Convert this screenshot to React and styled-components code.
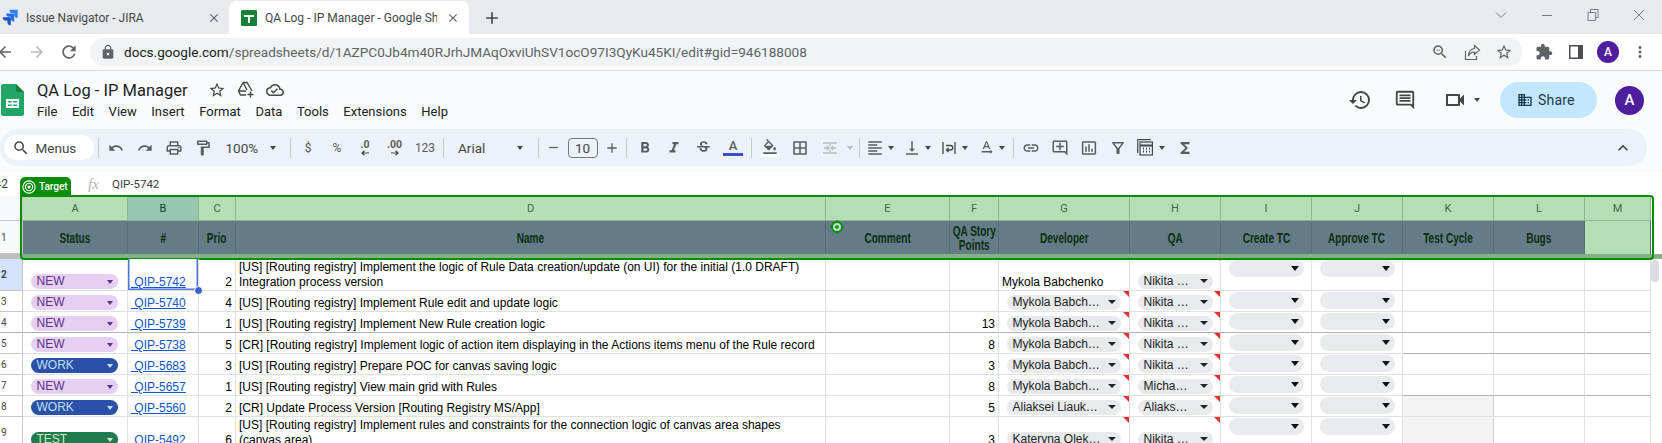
import React from 'react';
import styled, { createGlobalStyle } from 'styled-components';
import {
  MdAdd, MdArrowBack, MdArrowForward, MdBusiness, MdClose, MdExpandLess, MdExtension,
  MdFormatAlignLeft, MdFormatBold, MdFormatColorFill, MdFormatItalic, MdFunctions,
  MdHistory, MdInsertChartOutlined, MdLink, MdLock, MdMoreVert, MdOutlineAddComment, MdOutlineBorderAll,
  MdOutlineCloudDone, MdOutlineComment, MdOutlineFilterAlt, MdOutlineFormatPaint, MdOutlinePrint, MdOutlineVideocam, MdRedo,
  MdRefresh, MdRemove, MdSearch, MdStarBorder, MdStrikethroughS, MdTextRotationNone, MdUndo,
  MdVerticalAlignBottom, MdZoomOut,
} from 'react-icons/md';

const GlobalStyle = createGlobalStyle`
  html, body { margin: 0; padding: 0; background: #fff; overflow: hidden; }
  body { width: 1662px; height: 443px; font-family: Roboto, "Liberation Sans", sans-serif; }
`;

const Page = styled.div`
  width: 1662px;
  height: 443px;
  overflow: hidden;
`;

/* browser chrome */
const TabBar = styled.div`
  display: flex;
  align-items: stretch;
  height: 33px;
  padding-top: 1px;
  background: #e8eaed;
`;

const Tab = styled.div`
  display: flex;
  align-items: center;
  width: ${(p) => p.$w}px;
  padding-left: ${(p) => p.$pad}px;
  box-sizing: border-box;
  background: ${(p) => (p.$active ? '#fff' : 'transparent')};
  border-radius: 8px 8px 0 0;
  color: #45474a;
  font-size: 12px;
`;

const TabTitle = styled.span`
  width: ${(p) => p.$w}px;
  margin-left: ${(p) => p.$ml}px;
  overflow: hidden;
  white-space: nowrap;
`;

const TabClose = styled.span`
  display: flex;
  margin-left: ${(p) => p.$ml || 0}px;
  color: #5f6368;
`;

const NewTab = styled.span`
  display: flex;
  align-items: center;
  margin-left: 13px;
  color: #45474a;
`;

const WindowControls = styled.div`
  display: flex;
  margin-left: auto;
`;

const WindowButton = styled.span`
  display: flex;
  align-items: center;
  justify-content: center;
  width: 46px;
  height: 28px;
`;

const AddressRow = styled.div`
  display: flex;
  align-items: center;
  height: 36px;
  background: #fff;
  border-bottom: 1px solid #dadce0;
`;

const NavButton = styled.span`
  display: flex;
  justify-content: center;
  width: 32px;
  flex: none;
  color: ${(p) => (p.$dim ? '#b4b7bb' : '#5f6368')};
  &:first-child { margin-left: -11px; }
`;

const Omnibox = styled.div`
  display: flex;
  align-items: center;
  width: 1432px;
  height: 28px;
  margin-left: 5px;
  padding: 0 2px 0 10px;
  box-sizing: border-box;
  background: #f1f3f4;
  border-radius: 14px;
  color: #5f6368;
`;

const Url = styled.div`
  flex: 1;
  margin-left: 8px;
  font-size: 13.6px;
  color: #5f6368;
  white-space: nowrap;
`;

const Host = styled.span`
  color: #202124;
`;

const OmniButton = styled.span`
  display: flex;
  justify-content: center;
  width: 32px;
  color: #5f6368;
`;

const ChromeActions = styled.div`
  display: flex;
  align-items: center;
  margin-left: 6px;
`;

const Avatar = styled.span`
  display: flex;
  align-items: center;
  justify-content: center;
  width: ${(p) => p.$size}px;
  height: ${(p) => p.$size}px;
  background: #4f1e9e;
  border-radius: 50%;
  color: #fff;
  font-size: ${(p) => p.$font}px;
  font-weight: 500;
`;

const AvatarSlot = styled.span`
  display: flex;
  justify-content: center;
  width: 32px;
`;

/* docs header */
const DocArea = styled.div`
  background: #f9fbfd;
  padding-bottom: 6px;
`;

const DocHeader = styled.div`
  display: flex;
  align-items: center;
  height: 58px;
  padding-left: 1px;
  padding-right: 18px;
`;

const DocInfo = styled.div`
  margin-left: 13px;
`;

const TitleRow = styled.div`
  display: flex;
  align-items: center;
  height: 22px;
`;

const DocTitle = styled.span`
  width: 150px;
  color: #1f1f1f;
  font-size: 16.5px;
  white-space: nowrap;
`;

const TitleIcons = styled.div`
  display: flex;
  margin-left: 15px;
  color: #444746;
`;

const TitleIcon = styled.span`
  display: flex;
  justify-content: center;
  width: 29px;
`;

const Menu = styled.div`
  display: flex;
  gap: 14.6px;
  margin-top: 2px;
  line-height: 18px;
  color: #202124;
  font-size: 13px;
`;

const DocActions = styled.div`
  display: flex;
  align-items: center;
  margin-left: auto;
  color: #444746;
`;

const DocAction = styled.span`
  display: flex;
  justify-content: center;
  width: ${(p) => p.$w}px;
  margin-left: ${(p) => p.$ml || 0}px;
`;

const ShareButton = styled.div`
  display: flex;
  align-items: center;
  gap: 5px;
  width: 97px;
  height: 36px;
  margin-left: 18px;
  padding-left: 17px;
  box-sizing: border-box;
  background: #c2e7ff;
  border-radius: 18px;
  color: #1c3a52;
  font-size: 14px;
  letter-spacing: 0.2px;
`;

const DocAvatar = styled.div`
  margin-left: 18px;
`;

/* toolbar */
const Toolbar = styled.div`
  display: flex;
  align-items: center;
  width: 1647px;
  height: 37px;
  padding-left: 3.5px;
  box-sizing: border-box;
  background: #edf2fa;
  border-radius: 18px;
`;

const SearchMenus = styled.div`
  display: flex;
  align-items: center;
  gap: 6px;
  width: 90px;
  height: 25px;
  padding-left: 8px;
  box-sizing: border-box;
  background: #fff;
  border-radius: 13px;
  color: #444746;
  font-size: 13.5px;
`;

const Sep = styled.span`
  display: flex;
  justify-content: center;
  flex: none;
  width: ${(p) => p.$w}px;
  &::after {
    content: '';
    width: 1px;
    height: 20px;
    background: #c7c7c7;
  }
`;

const Slot = styled.span`
  display: flex;
  align-items: center;
  justify-content: center;
  flex: none;
  width: ${(p) => p.$w}px;
  margin-left: ${(p) => p.$ml || 0}px;
  color: ${(p) => (p.$off ? '#b8bbbf' : '#5a5d60')};
  font-size: 12px;
`;

const Caret = styled.span`
  width: 0;
  height: 0;
  border-left: 3.5px solid transparent;
  border-right: 3.5px solid transparent;
  border-top: 4px solid ${(p) => (p.$off ? '#b8bbbf' : '#444746')};
`;

const TextPicker = styled.span`
  display: flex;
  align-items: center;
  flex: none;
  width: ${(p) => p.$w}px;
  padding-left: ${(p) => p.$pad}px;
  box-sizing: border-box;
  color: #444746;
  font-size: 13.5px;
`;

const PickerText = styled.span`
  width: ${(p) => p.$w}px;
`;

const SizeBox = styled.span`
  display: flex;
  align-items: center;
  justify-content: center;
  flex: none;
  width: 30px;
  height: 20px;
  margin: 0 4px;
  border: 1px solid #747775;
  border-radius: 4px;
  box-sizing: border-box;
  color: #444746;
  font-size: 13.5px;
`;

const Decimal = styled.span`
  display: flex;
  flex-direction: column;
  align-items: center;
  font-size: 10.5px;
  font-weight: 700;
  line-height: 10px;
`;

const ColorGlyph = styled.span`
  display: flex;
  flex-direction: column;
  align-items: center;
  font-size: 13px;
  font-weight: 500;
  line-height: 14px;
  &::after {
    content: '';
    width: 20px;
    height: 3px;
    background: ${(p) => p.$bar};
  }
`;

const FillGlyph = styled.span`
  display: flex;
  flex-direction: column;
  align-items: center;
  &::after {
    content: '';
    width: 20px;
    height: 3px;
    margin-top: -1px;
    background: #fff;
  }
`;

const Collapse = styled.span`
  display: flex;
  justify-content: center;
  width: 30px;
  margin-left: auto;
  margin-right: 9.5px;
  color: #444746;
`;

/* formula bar */
const FormulaBar = styled.div`
  display: flex;
  align-items: center;
  height: 24px;
  background: #fff;
  color: #3c4043;
  font-size: 11.5px;
`;

const NameBox = styled.span`
  width: 93.5px;
  margin-left: -5.5px;
  flex: none;
  font-size: 12px;
`;

const FxMark = styled.span`
  width: 24px;
  color: #b5b5b5;
  font: italic 15px "Liberation Serif", serif;
`;

/* sheet */
const COLS = '23px 105px 71px 37px 590px 124px 49px 131px 91px 91px 91px 91px 91px 66px 11px';

const Sheet = styled.div`
  position: relative;
  font-family: "Liberation Sans", Arial, sans-serif;
  font-size: 12px;
  color: #000;
`;

const Row = styled.div`
  display: grid;
  grid-template-columns: ${COLS};
  height: ${(p) => p.$h}px;
`;

const RowHead = styled.div`
  display: flex;
  align-items: center;
  padding-left: 1px;
  overflow: hidden;
  background: ${(p) => (p.$on ? '#d3e3fd' : p.$tint ? '#f8f9fa' : '#fff')};
  border-right: 1px solid #c7c7c7;
  border-bottom: 1px solid ${(p) => (p.$strong ? '#b0b0b0' : '#c7c7c7')};
  font-family: Roboto, sans-serif;
  font-size: 10px;
  font-weight: ${(p) => (p.$on ? 700 : 400)};
  color: #444;
`;

const ColHead = styled.div`
  display: flex;
  align-items: center;
  justify-content: center;
  padding-top: 1px;
  background: ${(p) => (p.$on ? '#97c7b3' : '#b5deb5')};
  border-right: 1px solid #8cb88c;
  border-bottom: 1px solid #8cb88c;
  color: ${(p) => (p.$on ? '#123c2c' : '#3f6b40')};
  font-family: Roboto, sans-serif;
  font-size: 11px;
`;

const TitleCell = styled.div`
  display: flex;
  align-items: center;
  justify-content: center;
  background: ${(p) => (p.$blank ? '#b5deb5' : '#647b88')};
  border-right: 1px solid #566d7a;
  color: #0e2e0c;
  font-size: 15px;
  font-weight: 700;
  line-height: 14px;
  text-align: center;
`;

/* no condensed face is installed, so the heading face is squeezed */
const TitleText = styled.span`
  display: inline-block;
  white-space: nowrap;
  transform: scaleX(0.67);
`;

const ThawBar = styled.div`
  display: flex;
  height: 5px;
  background: #84b284;
`;

const ThawHead = styled.div`
  width: 21px;
  background: #bdbdbd;
`;

const Cell = styled.div`
  position: relative;
  display: flex;
  align-items: ${(p) => p.$align || 'flex-end'};
  justify-content: ${(p) => (p.$right ? 'flex-end' : 'flex-start')};
  min-width: 0;
  padding: ${(p) => p.$pad || '0 3px'};
  box-sizing: border-box;
  overflow: ${(p) => (p.$selected ? 'visible' : 'hidden')};
  z-index: ${(p) => (p.$selected ? 2 : 'auto')};
  line-height: 15px;
  background: ${(p) => (p.$grey ? '#f3f3f3' : '#fff')};
  border-right: 1px solid ${(p) => (p.$grey ? '#d0d0d0' : '#e0e0e0')};
  border-bottom: 1px solid ${(p) => (p.$strong ? '#b0b0b0' : '#e0e0e0')};
  box-shadow: ${(p) => (p.$selected
    ? 'inset 1.5px 0 0 #4a76e0, inset -1.5px 0 0 #4a76e0, inset 0 -1.5px 0 #4a76e0'
    : 'none')};
`;

const SheetLink = styled.a`
  color: #1155cc;
  text-decoration: underline;
  white-space: pre;
`;

const Chip = styled.div`
  position: relative;
  display: flex;
  align-items: center;
  width: ${(p) => p.$w}px;
  height: 15px;
  margin-left: ${(p) => p.$ml}px;
  padding-left: 5.5px;
  box-sizing: border-box;
  background: ${(p) => p.$bg};
  border-radius: 8px;
  color: ${(p) => p.$fg};
  white-space: nowrap;
`;

const ChipCaret = styled.span`
  position: absolute;
  right: 5.5px;
  top: ${(p) => p.$top}px;
  width: 0;
  height: 0;
  border-left: ${(p) => p.$half}px solid transparent;
  border-right: ${(p) => p.$half}px solid transparent;
  border-top: ${(p) => p.$half + 0.5}px solid ${(p) => p.$color};
`;

const EmptyChip = styled.div`
  position: relative;
  width: 75px;
  height: 17px;
  margin: 1px 0 0 ${(p) => p.$ml}px;
  background: #e8eaed;
  border-radius: 8.5px;
`;

const Note = styled.span`
  position: absolute;
  top: ${(p) => p.$top || 0}px;
  right: 0;
  width: 0;
  height: 0;
  border-top: 6px solid #ea2f2f;
  border-left: 6px solid transparent;
`;

const FillHandle = styled.span`
  position: absolute;
  right: -5px;
  bottom: -5px;
  width: 7px;
  height: 7px;
  background: #3a62cf;
  border: 1px solid #fff;
  border-radius: 50%;
`;

const Frame = styled.div`
  position: absolute;
  left: 20px;
  top: -1px;
  width: 1634px;
  height: 65px;
  box-sizing: border-box;
  border: 2px solid #078c07;
  border-radius: 0 4px 4px 4px;
  pointer-events: none;
`;

const TargetTag = styled.div`
  position: absolute;
  left: 20px;
  top: -19px;
  display: flex;
  align-items: center;
  gap: 3px;
  width: 51px;
  height: 19px;
  padding-left: 2px;
  box-sizing: border-box;
  background: #078c07;
  border-radius: 5px 5px 0 0;
  color: #fff;
  font-family: Roboto, sans-serif;
  font-size: 10px;
  font-weight: 500;
`;

const Pin = styled.span`
  position: absolute;
  left: 830px;
  top: 24px;
  display: flex;
`;

const ScrollThumb = styled.div`
  position: absolute;
  right: 3px;
  top: 64px;
  width: 8px;
  height: 22px;
  background: #dadce0;
  border-radius: 4px;
`;

const ScrollCell = styled.div`
  background: #fff;
`;

const chromeIcon = { size: 18 };

function JiraIcon() {
  return (
    <svg width="17" height="17" viewBox="0 0 25 25">
      <path d="M23 1H11a5 5 0 0 0 5 5h2v2a5 5 0 0 0 5 5z" fill="#2684ff" />
      <path d="M18 6.500H6a5 5 0 0 0 5 5h2v2a5 5 0 0 0 5 5z" fill="#2a6fe8" />
      <path d="M13 12H1a5 5 0 0 0 5 5h2v2a5 5 0 0 0 5 5z" fill="#1d52c4" />
    </svg>
  );
}

function SheetsFavicon() {
  return (
    <svg width="16" height="16" viewBox="0 0 16 16">
      <rect width="16" height="16" rx="1" fill="#188038" />
      <path d="M3 5h10v2H9v6H7V7H3z" fill="#fff" />
    </svg>
  );
}

function SheetsLogo() {
  return (
    <svg width="23" height="32" viewBox="0 0 23 32">
      <path d="M2 0h13l8 8v22a2 2 0 0 1-2 2H2a2 2 0 0 1-2-2V2a2 2 0 0 1 2-2z" fill="#23a566" />
      <path d="M15 0l8 8h-6a2 2 0 0 1-2-2z" fill="#188038" />
      <path d="M5 15h13v9H5z" fill="#fff" />
      <path d="M7 17h3.800v1.500H7zM12.200 17H16v1.500h-3.800zM7 20.500h3.800V22H7zM12.200 20.500H16V22h-3.800z" fill="#23a566" />
    </svg>
  );
}

function DriveAddIcon() {
  return (
    <svg width="17" height="17" viewBox="0 0 17 17" fill="none" stroke="#444746" strokeWidth="1.400">
      <path d="M6 1.500h4l5 8.500M6 1.500L1.500 10 3.500 14H9M6 1.500L10 9M1.500 10H9" />
      <path d="M13.500 10.500v6M10.500 13.500h6" />
    </svg>
  );
}

function ChevronThin() {
  return (
    <svg width="12" height="12" viewBox="0 0 12 12" fill="none" stroke="#7c7f83">
      <path d="M1 3.500l5 5 5-5" />
    </svg>
  );
}

function MinimizeThin() {
  return (
    <svg width="12" height="12" viewBox="0 0 12 12" stroke="#7c7f83">
      <path d="M1 6.500h10" />
    </svg>
  );
}

function RestoreThin() {
  return (
    <svg width="12" height="12" viewBox="0 0 12 12" fill="none" stroke="#7c7f83">
      <path d="M1 3.500h7.500v8H1zM3.500 3.500v-3H11v8H8.500" />
    </svg>
  );
}

function CloseThin() {
  return (
    <svg width="12" height="12" viewBox="0 0 12 12" stroke="#7c7f83">
      <path d="M1 1l10 10M11 1L1 11" />
    </svg>
  );
}

function PageShare() {
  return (
    <svg width="17" height="17" viewBox="0 0 17 17" fill="none" stroke="#5f6368" strokeWidth="1.200">
      <path d="M1.500 7v8.500h11V12" />
      <path d="M10.500 1.500L15.500 6l-5 4.500V8C7.500 8 5.500 9.500 4.500 12c0-4 2-7 6-7.500z" />
    </svg>
  );
}

function SidePanel() {
  return (
    <svg width="14" height="14" viewBox="0 0 14 14">
      <rect width="14" height="14" fill="#4a4d51" />
      <rect x="1.500" y="1.500" width="7.500" height="11" fill="#fff" />
    </svg>
  );
}

function MergeIcon() {
  return (
    <svg width="14" height="14" viewBox="0 0 14 14" fill="none" stroke="#b8bbbf" strokeWidth="1.400">
      <path d="M0 2h14M0 12h14M6 7H1M8 7h5M4 5l2 2-2 2M10 5L8 7l2 2M7 3v2M7 9v2" />
    </svg>
  );
}

function WrapIcon() {
  return (
    <svg width="14" height="14" viewBox="0 0 14 14" fill="none" stroke="#444746" strokeWidth="1.300">
      <path d="M1 1v12M13 1v12M4 4.500h4.500a2.200 2.200 0 0 1 0 4.500H4.500M6.500 7L4.500 9l2 2" />
    </svg>
  );
}

function DecimalArrow({ right }) {
  return (
    <svg width="8" height="6" viewBox="0 0 8 6" fill="none" stroke="#444746" strokeWidth="1.200">
      {right ? <path d="M0 3h7M4.500 .7L7 3 4.500 5.300" /> : <path d="M8 3H1M3.500 .7L1 3l2.500 2.300" />}
    </svg>
  );
}

function FunctionsMenuIcon() {
  return (
    <svg width="16" height="17" viewBox="0 0 16 17" fill="none" stroke="#444746" strokeWidth="1.200">
      <path d="M.7 14V.7h13" />
      <rect x="3" y="3" width="12.400" height="13" fill="#edf2fa" />
      <path d="M3 6.500h12.400M6 9.500h1M9 9.500h1M12 9.500h1M6 12.500h1M9 12.500h1M12 12.500h1" strokeWidth="1.800" />
    </svg>
  );
}

function TargetIcon() {
  return (
    <svg width="14" height="14" viewBox="0 0 16 16" fill="none" stroke="#fff" strokeWidth="1.200">
      <circle cx="8" cy="8" r="7" />
      <circle cx="8" cy="8" r="4.200" />
      <circle cx="8" cy="8" r="1.800" fill="#fff" stroke="none" />
    </svg>
  );
}

function PinIcon() {
  return (
    <svg width="14" height="14" viewBox="0 0 14 14" fill="#b8dcc0" stroke="#078c07" strokeWidth="2">
      <circle cx="7" cy="7" r="5" />
      <circle cx="7" cy="7" r="1.800" fill="#078c07" stroke="none" />
      <path d="M7 0v1.500M7 12.500V14M0 7h1.500M12.500 7H14" strokeWidth="1.400" />
    </svg>
  );
}

const columns = ['A', 'B', 'C', 'D', 'E', 'F', 'G', 'H', 'I', 'J', 'K', 'L', 'M'];
const titles = ['Status', '#', 'Prio', 'Name', 'Comment', 'QA Story\nPoints', 'Developer', 'QA', 'Create TC', 'Approve TC', 'Test Cycle', 'Bugs'];
const menus = ['File', 'Edit', 'View', 'Insert', 'Format', 'Data', 'Tools', 'Extensions', 'Help'];

const chipColors = {
  NEW: { bg: '#e6cff2', fg: '#5a3286' },
  WORK: { bg: '#2b50a8', fg: '#bfe1f6' },
  TEST: { bg: '#1f7a4d', fg: '#d4edbc' },
};

const rows = [
  {
    n: 2, h: 32, status: 'NEW', id: 'QIP-5742', prio: 2,
    name: '[US] [Routing registry] Implement the logic of Rule Data creation/update (on UI) for the initial (1.0 DRAFT) Integration process version',
    dev: 'Mykola Babchenko', plainDev: true, qa: 'Nikita …',
  },
  { n: 3, h: 21, status: 'NEW', id: 'QIP-5740', prio: 4, name: '[US] [Routing registry] Implement Rule edit and update logic', dev: 'Mykola Babch…', qa: 'Nikita …' },
  { n: 4, h: 21, status: 'NEW', id: 'QIP-5739', prio: 1, name: '[US] [Routing registry] Implement New Rule creation logic', points: 13, dev: 'Mykola Babch…', qa: 'Nikita …', strong: true },
  { n: 5, h: 21, status: 'NEW', id: 'QIP-5738', prio: 5, name: '[CR] [Routing registry] Implement logic of action item displaying in the Actions items menu of the Rule record', points: 8, dev: 'Mykola Babch…', qa: 'Nikita …', strongEnd: true },
  { n: 6, h: 21, status: 'WORK', id: 'QIP-5683', prio: 3, name: '[US] [Routing registry] Prepare POC for canvas saving logic', points: 3, dev: 'Mykola Babch…', qa: 'Nikita …' },
  { n: 7, h: 21, status: 'NEW', id: 'QIP-5657', prio: 1, name: '[US] [Routing registry] View main grid with Rules', points: 8, dev: 'Mykola Babch…', qa: 'Micha…', strongEnd: true },
  { n: 8, h: 21, status: 'WORK', id: 'QIP-5560', prio: 2, name: '[CR] Update Process Version [Routing Registry MS/App]', points: 5, dev: 'Aliaksei Liauk…', qa: 'Aliaks…', grey: true },
  {
    n: 9, h: 32, status: 'TEST', id: 'QIP-5492', prio: 6,
    name: '[US] [Routing registry] Implement rules and constraints for the connection logic of canvas area shapes (canvas area)',
    points: 3, dev: 'Kateryna Olek…', qa: 'Nikita …', grey: true,
  },
];

function SheetRow({ row }) {
  const { n, h, status, id, prio, name, points, dev, plainDev, qa, strong, strongEnd, grey } = row;
  const tone = chipColors[status];
  const first = n === 2;
  return (
    <Row $h={h}>
      <RowHead $on={first} $strong={strong}>{n}</RowHead>
      <Cell $strong={strong} $pad="0 0 1px">
        <Chip $w={87} $ml={8} $bg={tone.bg} $fg={tone.fg}>
          {status}
          <ChipCaret $top={5.5} $half={3.5} $color={tone.fg} />
        </Chip>
      </Cell>
      <Cell $strong={strong} $selected={first}>
        <SheetLink>{` ${id}`}</SheetLink>
        {first && <FillHandle />}
      </Cell>
      <Cell $right $strong={strong}>{prio}</Cell>
      <Cell $strong={strong}>{name}</Cell>
      <Cell $strong={strong} />
      <Cell $right $strong={strong}>{points}</Cell>
      <Cell $strong={strong} $pad={plainDev ? '0 3px' : '0 0 1px'}>
        {!first && <Note />}
        {plainDev ? dev : (
          <Chip $w={114} $ml={8} $bg="#e8eaed" $fg="#222">
            {dev}
            <ChipCaret $top={5} $half={4} $color="#222" />
          </Chip>
        )}
      </Cell>
      <Cell $strong={strong} $pad="0 0 1px">
        <Note $top={first ? -4 : 0} />
        <Chip $w={75} $ml={8} $bg="#e8eaed" $fg="#222">
          {qa}
          <ChipCaret $top={5} $half={4} $color="#222" />
        </Chip>
      </Cell>
      <Cell $strong={strong} $align="flex-start" $pad="0">
        <EmptyChip $ml={8}>
          <ChipCaret $top={6} $half={4.5} $color="#111" />
        </EmptyChip>
      </Cell>
      <Cell $strong={strong} $align="flex-start" $pad="0">
        <EmptyChip $ml={8}>
          <ChipCaret $top={6} $half={4.5} $color="#111" />
        </EmptyChip>
      </Cell>
      <Cell $strong={strong || strongEnd} $grey={grey} />
      <Cell $strong={strong || strongEnd} />
      <Cell $strong={strong || strongEnd} />
      <ScrollCell />
    </Row>
  );
}

function App() {
  return (
    <Page>
      <GlobalStyle />
      <TabBar>
        <Tab $w={228.5} $pad={2}>
          <JiraIcon />
          <TabTitle $w={178} $ml={7}>Issue Navigator - JIRA</TabTitle>
          <TabClose $ml={2.5}><MdClose size={14} /></TabClose>
        </Tab>
        <Tab $w={240} $pad={12.5} $active>
          <SheetsFavicon />
          <TabTitle $w={172} $ml={8}>QA Log - IP Manager - Google Sheets</TabTitle>
          <TabClose $ml={8.5}><MdClose size={14} /></TabClose>
        </Tab>
        <NewTab><MdAdd size={20} /></NewTab>
        <WindowControls>
          <WindowButton><ChevronThin /></WindowButton>
          <WindowButton><MinimizeThin /></WindowButton>
          <WindowButton><RestoreThin /></WindowButton>
          <WindowButton><CloseThin /></WindowButton>
        </WindowControls>
      </TabBar>

      <AddressRow>
        <NavButton><MdArrowBack {...chromeIcon} /></NavButton>
        <NavButton $dim><MdArrowForward {...chromeIcon} /></NavButton>
        <NavButton><MdRefresh size={20} /></NavButton>
        <Omnibox>
          <MdLock size={16} />
          <Url><Host>docs.google.com</Host>/spreadsheets/d/1AZPC0Jb4m40RJrhJMAqOxviUhSV1ocO97I3QyKu45KI/edit#gid=946188008</Url>
          <OmniButton><MdZoomOut size={18} /></OmniButton>
          <OmniButton><PageShare /></OmniButton>
          <OmniButton><MdStarBorder size={18} /></OmniButton>
        </Omnibox>
        <ChromeActions>
          <OmniButton><MdExtension size={18} /></OmniButton>
          <OmniButton><SidePanel /></OmniButton>
          <AvatarSlot><Avatar $size={22} $font={12}>A</Avatar></AvatarSlot>
          <OmniButton><MdMoreVert size={18} /></OmniButton>
        </ChromeActions>
      </AddressRow>

      <DocArea>
        <DocHeader>
          <SheetsLogo />
          <DocInfo>
            <TitleRow>
              <DocTitle>QA Log - IP Manager</DocTitle>
              <TitleIcons>
                <TitleIcon><MdStarBorder size={18} /></TitleIcon>
                <TitleIcon><DriveAddIcon /></TitleIcon>
                <TitleIcon><MdOutlineCloudDone size={18} /></TitleIcon>
              </TitleIcons>
            </TitleRow>
            <Menu>{menus.map((m) => <span key={m}>{m}</span>)}</Menu>
          </DocInfo>
          <DocActions>
            <DocAction $w={44}><MdHistory size={24} /></DocAction>
            <DocAction $w={45}><MdOutlineComment size={22} /></DocAction>
            <DocAction $w={34} $ml={11}><MdOutlineVideocam size={24} /></DocAction>
            <DocAction $w={10}><Caret /></DocAction>
            <ShareButton><MdBusiness size={16} />Share</ShareButton>
            <DocAvatar><Avatar $size={29} $font={15}>A</Avatar></DocAvatar>
          </DocActions>
        </DocHeader>

        <Toolbar>
          <SearchMenus><MdSearch size={18} />Menus</SearchMenus>
          <Sep $w={9} />
          <Slot $w={27}><MdUndo size={16} /></Slot>
          <Slot $w={30}><MdRedo size={16} /></Slot>
          <Slot $w={29}><MdOutlinePrint size={18} /></Slot>
          <Slot $w={28}><MdOutlineFormatPaint size={18} /></Slot>
          <TextPicker $w={69} $pad={9}><PickerText $w={44}>100%</PickerText><Caret /></TextPicker>
          <Sep $w={9} />
          <Slot $w={27}>$</Slot>
          <Slot $w={31}>%</Slot>
          <Slot $w={25}><Decimal>.0<DecimalArrow /></Decimal></Slot>
          <Slot $w={34}><Decimal>.00<DecimalArrow right /></Decimal></Slot>
          <Slot $w={27}>123</Slot>
          <Sep $w={9} />
          <TextPicker $w={86} $pad={10.5}><PickerText $w={59}>Arial</PickerText><Caret /></TextPicker>
          <Sep $w={9} />
          <Slot $w={21}><MdRemove size={15} /></Slot>
          <SizeBox>10</SizeBox>
          <Slot $w={20}><MdAdd size={16} /></Slot>
          <Sep $w={10} />
          <Slot $w={26}><MdFormatBold size={18} /></Slot>
          <Slot $w={33}><MdFormatItalic size={18} /></Slot>
          <Slot $w={26}><MdStrikethroughS size={17} /></Slot>
          <Slot $w={33}><ColorGlyph $bar="#3c4fc4">A</ColorGlyph></Slot>
          <Sep $w={3} />
          <Slot $w={34}><FillGlyph><MdFormatColorFill size={16} /></FillGlyph></Slot>
          <Slot $w={27}><MdOutlineBorderAll size={18} /></Slot>
          <Slot $w={33} $off><MergeIcon /></Slot>
          <Slot $w={7}><Caret $off /></Slot>
          <Sep $w={11} />
          <Slot $w={21}><MdFormatAlignLeft size={18} /></Slot>
          <Slot $w={11}><Caret /></Slot>
          <Slot $w={21} $ml={5}><MdVerticalAlignBottom size={18} /></Slot>
          <Slot $w={11}><Caret /></Slot>
          <Slot $w={21} $ml={5}><WrapIcon /></Slot>
          <Slot $w={11}><Caret /></Slot>
          <Slot $w={21} $ml={5}><MdTextRotationNone size={17} /></Slot>
          <Slot $w={11}><Caret /></Slot>
          <Sep $w={12} />
          <Slot $w={23}><MdLink size={18} /></Slot>
          <Slot $w={35}><MdOutlineAddComment size={18} /></Slot>
          <Slot $w={23}><MdInsertChartOutlined size={18} /></Slot>
          <Slot $w={35}><MdOutlineFilterAlt size={18} /></Slot>
          <Slot $w={19}><FunctionsMenuIcon /></Slot>
          <Slot $w={15}><Caret /></Slot>
          <Slot $w={31}><MdFunctions size={18} /></Slot>
          <Collapse><MdExpandLess size={20} /></Collapse>
        </Toolbar>
      </DocArea>

      <FormulaBar>
        <NameBox>42</NameBox>
        <FxMark>fx</FxMark>
        QIP-5742
      </FormulaBar>

      <Sheet>
        <Row $h={25}>
          <RowHead $tint />
          {columns.map((c) => <ColHead key={c} $on={c === 'B'}>{c}</ColHead>)}
          <ScrollCell />
        </Row>
        <Row $h={33}>
          <RowHead $tint>1</RowHead>
          {titles.map((t) => {
            const [top, bottom] = t.split('\n');
            return (
              <TitleCell key={t}>
                <TitleText>{top}{bottom && <br />}{bottom}</TitleText>
              </TitleCell>
            );
          })}
          <TitleCell $blank />
          <ScrollCell />
        </Row>
        <ThawBar><ThawHead /></ThawBar>
        {rows.map((row) => <SheetRow key={row.n} row={row} />)}

        <Frame />
        <TargetTag><TargetIcon />Target</TargetTag>
        <Pin><PinIcon /></Pin>
        <ScrollThumb />
      </Sheet>
    </Page>
  );
}

export default App;
